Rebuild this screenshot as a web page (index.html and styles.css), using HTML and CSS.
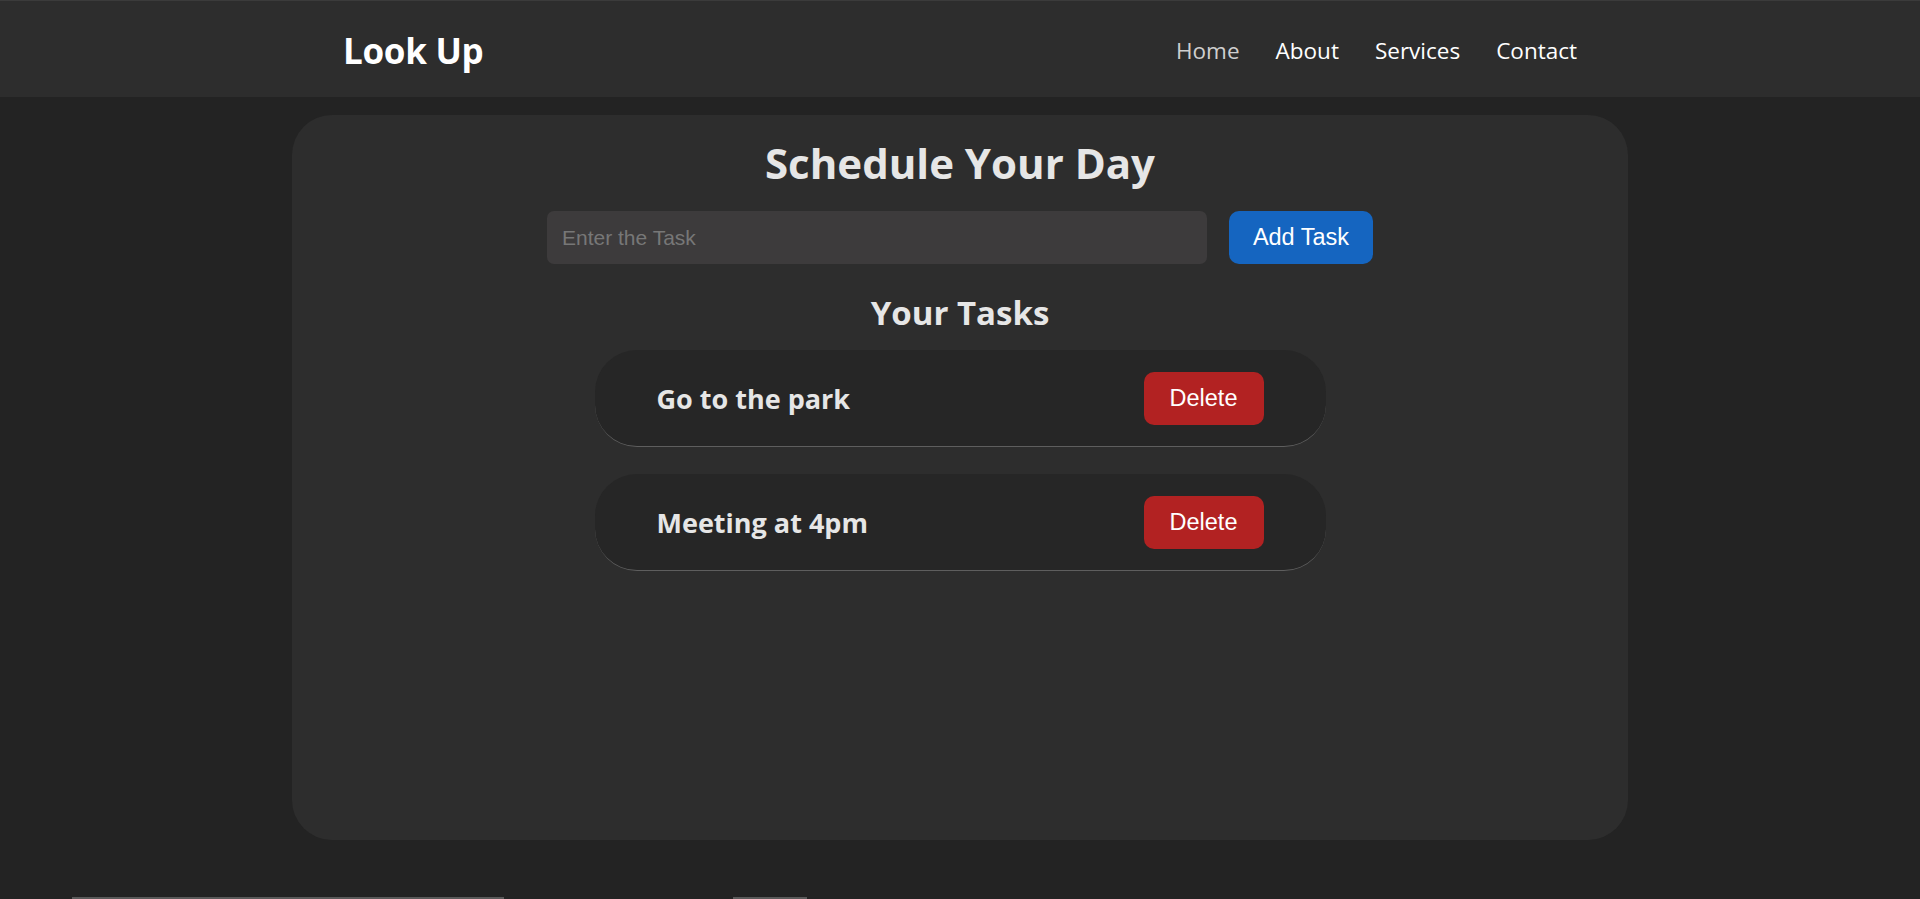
FILE: index.html
```html
<!DOCTYPE html>
<html lang="en">
<head>
<meta charset="utf-8">
<title>Look Up</title>
<link rel="stylesheet" href="styles.css">
</head>
<body>
<header class="site-header">
  <div class="header-inner">
    <div class="logo">Look Up</div>
    <nav class="nav">
      <a class="nav-link active" href="#">Home</a>
      <a class="nav-link" href="#">About</a>
      <a class="nav-link" href="#">Services</a>
      <a class="nav-link" href="#">Contact</a>
    </nav>
  </div>
</header>
<main class="card">
  <h1 class="title">Schedule Your Day</h1>
  <div class="add-row">
    <input class="task-input" type="text" placeholder="Enter the Task">
    <button class="btn btn-add">Add Task</button>
  </div>
  <h2 class="subtitle">Your Tasks</h2>
  <ul class="task-list">
    <li class="task">
      <span class="task-text">Go to the park</span>
      <button class="btn btn-delete">Delete</button>
    </li>
    <li class="task">
      <span class="task-text">Meeting at 4pm</span>
      <button class="btn btn-delete">Delete</button>
    </li>
  </ul>
</main>
<div class="bottom-strip">
  <div class="strip-bar wide"></div>
  <div class="strip-bar short"></div>
</div>
</body>
</html>
```
FILE: styles.css
```css
* { box-sizing: border-box; }

html, body {
  margin: 0;
  padding: 0;
}

body {
  background: #232323;
  font-family: "Open Sans", "Noto Sans", sans-serif;
  color: #e6e6e6;
}

.site-header {
  background: #2d2d2d;
  border-top: 1px solid #3b3b3b;
  height: 97px;
}

.header-inner {
  width: 1234px;
  height: 96px;
  margin: 0 auto;
  padding-top: 2px;
  display: flex;
  align-items: center;
  justify-content: space-between;
}

.logo {
  font-size: 35px;
  font-weight: 700;
  color: #ffffff;
  letter-spacing: -0.3px;
}

.nav {
  display: flex;
  gap: 36px;
}

.nav-link {
  color: #ffffff;
  text-decoration: none;
  font-size: 22.5px;
}

.nav-link.active {
  color: #cfcfcf;
}

.card {
  width: 1336px;
  height: 725px;
  margin: 18px auto 0;
  background: #2d2d2d;
  border-radius: 40px;
  display: flex;
  flex-direction: column;
  align-items: center;
  padding-top: 24px;
}

.title {
  margin: 0;
  font-size: 42px;
  line-height: 48px;
  font-weight: 700;
  color: #e6e6e6;
}

.add-row {
  display: flex;
  gap: 22px;
  margin-top: 24px;
}

.task-input {
  width: 660px;
  height: 53px;
  background: #3d3b3c;
  border: none;
  border-radius: 7px;
  padding: 0 15px;
  font-family: "Liberation Sans", Arial, sans-serif;
  font-size: 21px;
  color: #e6e6e6;
  outline: none;
}

.task-input::placeholder {
  color: #777777;
}

.btn {
  border: none;
  color: #ffffff;
  font-family: "Liberation Sans", Arial, sans-serif;
  font-size: 23.5px;
  border-radius: 10px;
  cursor: pointer;
}

.btn-add {
  width: 144px;
  height: 53px;
  background: #1565c0;
}

.subtitle {
  margin: 29px 0 0;
  font-size: 33px;
  line-height: 40px;
  font-weight: 700;
  color: #e6e6e6;
}

.task-list {
  list-style: none;
  margin: 17px 0 0;
  padding: 0;
  display: flex;
  flex-direction: column;
  gap: 27px;
}

.task {
  width: 731px;
  height: 97px;
  background: #262626;
  border-radius: 42px;
  border-bottom: 1px solid #5e5e5e;
  display: flex;
  align-items: center;
  justify-content: space-between;
  padding: 0 62px;
}

.task-text {
  font-size: 27px;
  font-weight: 700;
  color: #e6e6e6;
}

.btn-delete {
  width: 120px;
  height: 53px;
  background: #b22222;
}

.bottom-strip {
  display: flex;
  margin-top: 57px;
  padding-left: 72px;
  gap: 229px;
}

.strip-bar {
  height: 4px;
  background: #5a5a5a;
}

.strip-bar.wide { width: 432px; }
.strip-bar.short { width: 74px; }
```
